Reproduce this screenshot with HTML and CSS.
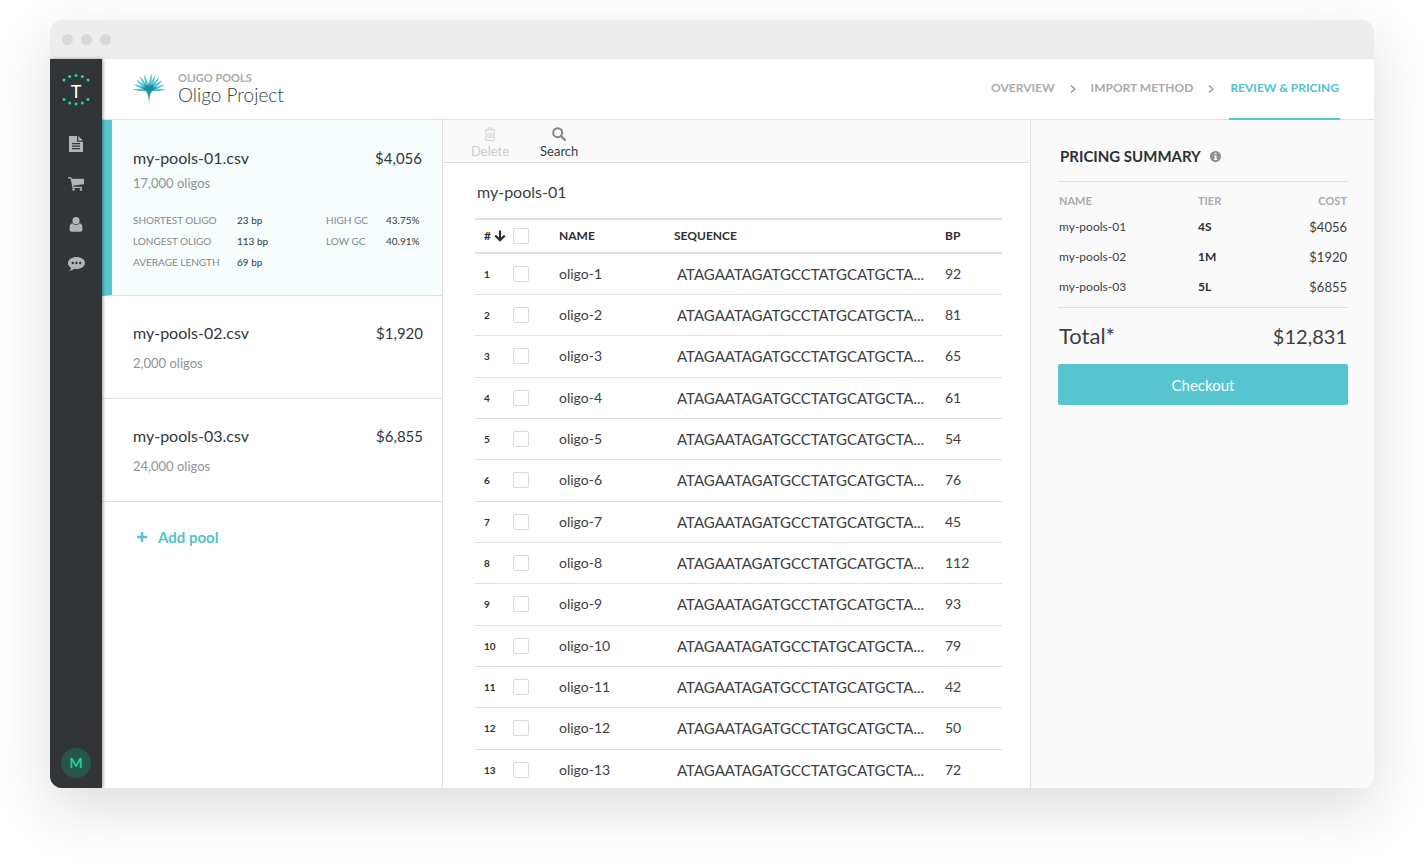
FILE: index.html
```html
<!DOCTYPE html>
<html lang="en">
<head>
<meta charset="utf-8">
<meta name="viewport" content="width=device-width, initial-scale=1">
<title>Oligo Project – Review &amp; Pricing</title>
<link rel="stylesheet" href="styles.css">
</head>
<body>
<div class="window">
  <div class="titlebar"><span class="dot"></span><span class="dot"></span><span class="dot"></span></div>
  <div class="app">
    <nav class="sidebar" aria-label="Main">
      <a class="brand" href="#" aria-label="Home">
        <svg width="30" height="34" viewBox="0 0 30 34">
          <g fill="#1fd79c">
            <circle cx="3" cy="7" r="1.5"/><circle cx="8.700" cy="3.600" r="1.5"/><circle cx="15" cy="2.500" r="1.5"/><circle cx="21.300" cy="3.600" r="1.5"/><circle cx="27" cy="7" r="1.5"/>
            <circle cx="3" cy="26.500" r="1.5"/><circle cx="8.700" cy="30" r="1.5"/><circle cx="15" cy="31" r="1.5"/><circle cx="21.300" cy="30" r="1.5"/><circle cx="27" cy="26.500" r="1.5"/>
          </g>
          <text class="brand-letter" x="15" y="25" text-anchor="middle">T</text>
        </svg>
      </a>
      <a class="nav-item" href="#" aria-label="Documents">
        <svg width="14" height="16" viewBox="0 0 14 16"><path fill="#b3b4b5" fill-rule="evenodd" d="M1.200 0H8v4.800c0 .6.400 1 1 1h5V15c0 .6-.5 1-1.100 1H1.200C.5 16 0 15.600 0 15V1c0-.6.500-1 1.200-1zM3 7v1.200h8V7zM3 9.500v1.200h8V9.500zM3 12v1.200h8V12zM9.300 0 14 4.600H9.300z"/></svg>
      </a>
      <a class="nav-item" href="#" aria-label="Cart">
        <svg width="16" height="14" viewBox="0 0 16 14"><path d="M0 .8h3l2 9.600h9" fill="none" stroke="#b3b4b5" stroke-width="1.200"/><path fill="#b3b4b5" d="M3.400 1.800H16v5.500L4.600 8.700z"/><circle cx="5.500" cy="12.500" r="1.300" fill="#b3b4b5"/><circle cx="13" cy="12.500" r="1.300" fill="#b3b4b5"/></svg>
      </a>
      <a class="nav-item" href="#" aria-label="Account">
        <svg width="14" height="15" viewBox="0 0 14 15"><circle cx="7" cy="3.700" r="3.600" fill="#b3b4b5"/><path fill="#b3b4b5" d="M3.500 6.300C4.500 7.500 5.700 8 7 8s2.500-.5 3.500-1.700c2.300.3 3 2.700 3 5.700 0 1.800-1 2.800-2.500 2.800H3C1.500 14.800.500 13.800.500 12c0-3 .7-5.400 3-5.700z"/></svg>
      </a>
      <a class="nav-item" href="#" aria-label="Messages">
        <svg width="17" height="14" viewBox="0 0 17 14"><path fill="#b3b4b5" d="M8.500 0C13.200 0 17 2.600 17 6s-3.800 6-8.500 6c-.8 0-1.600-.1-2.300-.2C4.900 13 3.300 13.700 1.500 13.900c.8-.9 1.400-1.900 1.500-3C1.200 9.700 0 8 0 6c0-3.400 3.800-6 8.500-6z"/><g fill="#313538"><circle cx="4.800" cy="6" r="1.200"/><circle cx="8.500" cy="6" r="1.200"/><circle cx="12.200" cy="6" r="1.200"/></g></svg>
      </a>
      <button class="avatar" type="button" aria-label="Profile M">M</button>
    </nav>
    <div class="content">
      <header class="topbar">
        <svg class="project-logo" width="34" height="34" viewBox="0 0 34 34">
          <defs>
            <path id="leaf-left" d="M17 19.500C14.800 14 14.200 7 15.500 1.500 17 7 18 13 17 19.500z"/>
            <path id="leaf-right" d="M17 19.500C19.200 14 19.800 7 18.500 1.500 17 7 16 13 17 19.500z"/>
          </defs>
          <g fill="#35b6c6" fill-opacity=".85">
            <use href="#leaf-left" transform="rotate(-82 17 18)"/><use href="#leaf-left" transform="rotate(-64 17 18)"/><use href="#leaf-left" transform="rotate(-46 17 18)"/><use href="#leaf-left" transform="rotate(-29 17 18)"/><use href="#leaf-left" transform="rotate(-12 17 18)"/>
            <use href="#leaf-right" transform="rotate(3 17 18)"/><use href="#leaf-right" transform="rotate(17 17 18)"/><use href="#leaf-right" transform="rotate(33 17 18)"/><use href="#leaf-right" transform="rotate(49 17 18)"/><use href="#leaf-right" transform="rotate(66 17 18)"/><use href="#leaf-right" transform="rotate(83 17 18)"/>
          </g>
          <path fill="#35b6c6" d="M14 19.500h6L17.600 24 17 33.500 16.400 24z"/>
          <path fill="#0c7f96" fill-opacity=".75" d="M17 10l1.500 4 3-2-.5 3.500 4-.5-4 3.500-3 2.500-1 7-1-7-3-2.500L9 15l4 .5-.5-3.500 3 2z"/>
        </svg>
        <div class="project">
          <span class="eyebrow">OLIGO POOLS</span>
          <h1 class="project-name">Oligo Project</h1>
        </div>
        <nav class="steps" aria-label="Progress">
          <a class="step" href="#">OVERVIEW</a>
          <svg class="chevron" width="6" height="8" viewBox="0 0 6 8"><path d="M1 .5 4.800 4 1 7.500" fill="none" stroke="#8d8f90" stroke-width="1.300"/></svg>
          <a class="step" href="#">IMPORT METHOD</a>
          <svg class="chevron" width="6" height="8" viewBox="0 0 6 8"><path d="M1 .5 4.800 4 1 7.500" fill="none" stroke="#8d8f90" stroke-width="1.300"/></svg>
          <a class="step current" href="#" aria-current="step">REVIEW &amp; PRICING</a>
        </nav>
      </header>
      <div class="columns">
        <section class="pools" aria-label="Pools">
          <article class="pool selected">
            <div class="pool-head"><h2 class="pool-name">my-pools-01.csv</h2><span class="pool-price">$4,056</span></div>
            <p class="pool-count">17,000 oligos</p>
            <dl class="stats">
              <dt>SHORTEST OLIGO</dt><dd>23 bp</dd><dt>HIGH GC</dt><dd>43.75%</dd>
              <dt>LONGEST OLIGO</dt><dd>113 bp</dd><dt>LOW GC</dt><dd>40.91%</dd>
              <dt>AVERAGE LENGTH</dt><dd>69 bp</dd>
            </dl>
          </article>
          <article class="pool">
            <div class="pool-head"><h2 class="pool-name">my-pools-02.csv</h2><span class="pool-price">$1,920</span></div>
            <p class="pool-count">2,000 oligos</p>
          </article>
          <article class="pool">
            <div class="pool-head"><h2 class="pool-name">my-pools-03.csv</h2><span class="pool-price">$6,855</span></div>
            <p class="pool-count">24,000 oligos</p>
          </article>
          <button class="add-pool" type="button"><svg width="10" height="10" viewBox="0 0 10 10"><path d="M5 0v10M0 5h10" stroke="#4fc3ce" stroke-width="2.400"/></svg>Add pool</button>
        </section>
        <main class="detail">
          <div class="toolbar">
            <button class="tool" type="button" disabled><svg width="12" height="14" viewBox="0 0 12 14"><path d="M.5 3h11M4 3V1h4v2M1.800 3v9.500c0 .6.300 1 .9 1h6.600c.6 0 .9-.4.900-1V3M4 5.500v5.500M6 5.500v5.500M8 5.500v5.500" fill="none" stroke="#d3d3d3"/></svg>Delete</button>
            <button class="tool" type="button"><svg width="14" height="14" viewBox="0 0 14 14"><circle cx="5.700" cy="5.700" r="4.500" fill="none" stroke="#858687" stroke-width="2"/><path d="M9 9l4 4" stroke="#858687" stroke-width="2.400" stroke-linecap="round"/></svg>Search</button>
          </div>
          <div class="sheet">
            <h2 class="sheet-title">my-pools-01</h2>
            <table class="oligos">
              <thead><tr>
                <th class="c-num"><span class="sort">#<svg width="12" height="12" viewBox="0 0 12 12"><path d="M6 .5v10M1.200 5.500 6 10.300l4.800-4.800" fill="none" stroke="#2c3033" stroke-width="2.200"/></svg></span></th>
                <th class="c-check"><input class="check" type="checkbox" aria-label="Select all"></th><th class="c-name">NAME</th><th class="c-seq">SEQUENCE</th><th class="c-bp">BP</th>
              </tr></thead>
              <tbody>
                <tr><td class="c-num">1</td><td><input class="check" type="checkbox" aria-label="Select oligo-1"></td><td>oligo-1</td><td class="c-seq">ATAGAATAGATGCCTATGCATGCTA...</td><td>92</td></tr>
                <tr><td class="c-num">2</td><td><input class="check" type="checkbox" aria-label="Select oligo-2"></td><td>oligo-2</td><td class="c-seq">ATAGAATAGATGCCTATGCATGCTA...</td><td>81</td></tr>
                <tr><td class="c-num">3</td><td><input class="check" type="checkbox" aria-label="Select oligo-3"></td><td>oligo-3</td><td class="c-seq">ATAGAATAGATGCCTATGCATGCTA...</td><td>65</td></tr>
                <tr><td class="c-num">4</td><td><input class="check" type="checkbox" aria-label="Select oligo-4"></td><td>oligo-4</td><td class="c-seq">ATAGAATAGATGCCTATGCATGCTA...</td><td>61</td></tr>
                <tr><td class="c-num">5</td><td><input class="check" type="checkbox" aria-label="Select oligo-5"></td><td>oligo-5</td><td class="c-seq">ATAGAATAGATGCCTATGCATGCTA...</td><td>54</td></tr>
                <tr><td class="c-num">6</td><td><input class="check" type="checkbox" aria-label="Select oligo-6"></td><td>oligo-6</td><td class="c-seq">ATAGAATAGATGCCTATGCATGCTA...</td><td>76</td></tr>
                <tr><td class="c-num">7</td><td><input class="check" type="checkbox" aria-label="Select oligo-7"></td><td>oligo-7</td><td class="c-seq">ATAGAATAGATGCCTATGCATGCTA...</td><td>45</td></tr>
                <tr><td class="c-num">8</td><td><input class="check" type="checkbox" aria-label="Select oligo-8"></td><td>oligo-8</td><td class="c-seq">ATAGAATAGATGCCTATGCATGCTA...</td><td>112</td></tr>
                <tr><td class="c-num">9</td><td><input class="check" type="checkbox" aria-label="Select oligo-9"></td><td>oligo-9</td><td class="c-seq">ATAGAATAGATGCCTATGCATGCTA...</td><td>93</td></tr>
                <tr><td class="c-num">10</td><td><input class="check" type="checkbox" aria-label="Select oligo-10"></td><td>oligo-10</td><td class="c-seq">ATAGAATAGATGCCTATGCATGCTA...</td><td>79</td></tr>
                <tr><td class="c-num">11</td><td><input class="check" type="checkbox" aria-label="Select oligo-11"></td><td>oligo-11</td><td class="c-seq">ATAGAATAGATGCCTATGCATGCTA...</td><td>42</td></tr>
                <tr><td class="c-num">12</td><td><input class="check" type="checkbox" aria-label="Select oligo-12"></td><td>oligo-12</td><td class="c-seq">ATAGAATAGATGCCTATGCATGCTA...</td><td>50</td></tr>
                <tr><td class="c-num">13</td><td><input class="check" type="checkbox" aria-label="Select oligo-13"></td><td>oligo-13</td><td class="c-seq">ATAGAATAGATGCCTATGCATGCTA...</td><td>72</td></tr>
              </tbody>
            </table>
          </div>
        </main>
        <aside class="pricing">
          <h2 class="pricing-title">PRICING SUMMARY <svg width="11" height="11" viewBox="0 0 11 11"><circle cx="5.500" cy="5.500" r="5.500" fill="#8d8f90"/><path d="M4.700 1.800h1.800v1.500H4.700zM4 4.500h2.500v3.300h.8V9H4V7.800h.8V5.600H4z" fill="#fff"/></svg></h2>
          <table class="costs">
            <thead><tr><th>NAME</th><th class="c-tier">TIER</th><th class="c-cost">COST</th></tr></thead>
            <tbody>
              <tr><td>my-pools-01</td><td class="c-tier">4S</td><td class="c-cost">$4056</td></tr>
              <tr><td>my-pools-02</td><td class="c-tier">1M</td><td class="c-cost">$1920</td></tr>
              <tr><td>my-pools-03</td><td class="c-tier">5L</td><td class="c-cost">$6855</td></tr>
            </tbody>
          </table>
          <div class="total"><span class="total-label">Total*</span><span>$12,831</span></div>
          <button class="checkout" type="button">Checkout</button>
        </aside>
      </div>
    </div>
  </div>
</div>
</body>
</html>
```
FILE: styles.css
```css
* { box-sizing: border-box; }
body {
  margin: 0;
  padding: 20px 50px 80px;
  height: 100vh;
  background: #fff;
  color: #3d4043;
  font: 14px/20px Lato, "Open Sans", sans-serif;
}
h1, h2, p, dl, dd { margin: 0; font-weight: 400; }
button { font: inherit; border: 0; background: none; padding: 0; cursor: pointer; }
a { text-decoration: none; color: inherit; }
svg { display: block; flex: none; }

.window {
  display: flex;
  flex-direction: column;
  height: 100%;
  border-radius: 12px;
  overflow: hidden;
  background: #fff;
  box-shadow: 0 20px 60px rgba(0, 0, 0, .14);
}
.titlebar {
  flex: none;
  display: flex;
  align-items: center;
  gap: 8px;
  height: 39px;
  padding: 0 12px;
  background: #ededed;
}
.dot { width: 11px; height: 11px; border-radius: 50%; background: #d9d9d9; }
.app { flex: 1; display: flex; min-height: 0; }

.sidebar {
  flex: none;
  z-index: 1;
  display: flex;
  flex-direction: column;
  align-items: center;
  width: 52px;
  padding: 14px 0 10px;
  background: #313538;
  box-shadow: 1px 0 3px rgba(0, 0, 0, .4);
}
.brand { margin-bottom: 17px; }
.brand-letter { font-size: 18px; fill: #fff; }
.nav-item { display: grid; place-items: center; width: 40px; height: 40px; }
.avatar {
  width: 30px;
  height: 30px;
  margin-top: auto;
  border-radius: 50%;
  background: #26564a;
  color: #24d095;
  font-weight: 700;
}

.content { flex: 1; display: flex; flex-direction: column; min-width: 0; }
.topbar {
  flex: none;
  display: flex;
  align-items: center;
  height: 61px;
  padding: 0 34px 0 30px;
  border-bottom: 1px solid #dfe0e0;
}
.project { display: flex; flex-direction: column; margin-left: 12px; }
.eyebrow { font-size: 11px; line-height: 12px; font-weight: 700; color: #a9abac; }
.project-name { font-size: 19px; line-height: 22px; font-weight: 300; }
.steps { display: flex; align-items: center; align-self: stretch; gap: 15px; margin-left: auto; font-size: 12px; font-weight: 700; color: #a9abac; }
.step { display: flex; align-items: center; align-self: stretch; padding-bottom: 2px; }
.current { margin-bottom: -1px; border-bottom: 2px solid #56c5d0; color: #4fc3ce; padding: 0 1px 1px; }

.columns { flex: 1; display: flex; min-height: 0; }
.pools { flex: none; width: 341px; border-right: 1px solid #dfe0e0; }
.pool { padding: 26px 19px 25px 31px; border-bottom: 1px solid #dfe0e0; }
.pool-head { display: flex; justify-content: space-between; font-size: 15px; line-height: 22px; color: #34383b; }
.pool-name { font-size: 16px; }
.pool-count { margin-top: 9px; font-size: 13px; color: #909394; }
.selected { padding: 27px 20px 22px 21px; border-left: 10px solid #56c5d0; background: #f7fdfd; }
.selected .pool-count { margin-top: 4px; }
.stats { display: grid; grid-template-columns: 104px 89px 60px auto; margin-top: 17px; font-size: 10px; line-height: 21px; }
.stats dt { color: #85888a; }
.stats dd { color: #34383b; }
.add-pool { display: flex; align-items: center; gap: 11px; padding: 25px 35px; font-size: 15px; font-weight: 700; color: #4fc3ce; }

.detail { flex: 1; min-width: 0; }
.toolbar { display: flex; gap: 31px; height: 43px; padding: 7px 28px 0; border-bottom: 1px solid #dfe0e0; background: #fafafa; }
.tool { display: flex; flex-direction: column; align-items: center; gap: 1px; height: 33px; font-size: 13px; line-height: 18px; color: #3d4043; }
.tool:disabled { color: #cbcccc; }
.sheet { padding: 18px 28px 0 32px; }
.sheet-title { padding-left: 2px; font-size: 16px; line-height: 22px; }
.oligos { width: 100%; margin-top: 15px; border-collapse: collapse; table-layout: fixed; text-align: left; }
.oligos th { height: 34px; padding: 0; border-top: 2px solid #dedfdf; border-bottom: 2px solid #dedfdf; font-size: 12px; color: #2c3033; }
.oligos td { height: 41px; padding: 0; border-bottom: 1px solid #dfe0e0; white-space: nowrap; }
.oligos tr:nth-child(3n) td { height: 42px; }
.oligos .c-num { width: 38px; padding-left: 9px; color: #2c3033; }
.oligos td.c-num { font-size: 10px; font-weight: 700; }
.sort { display: flex; align-items: center; gap: 3px; }
.c-check { width: 46px; }
.c-name { width: 115px; }
.oligos td.c-seq { padding-left: 3px; font-size: 15px; }
.c-bp { width: 57px; }
.check { display: block; appearance: none; width: 16px; height: 16px; margin: 0; border: 1px solid #d9dada; border-radius: 2px; background: #fff; }

.pricing { flex: none; width: 344px; padding: 26px 26px 0 27px; border-left: 1px solid #dfe0e0; background: #fafafa; }
.pricing-title { display: flex; align-items: center; gap: 9px; padding: 0 2px 15px; border-bottom: 1px solid #dfe0e0; font-size: 15px; font-weight: 700; color: #2c3033; }
.costs { width: 100%; margin-top: 8px; border-collapse: collapse; text-align: left; font-size: 12px; }
.costs th { height: 22px; padding: 0 1px; font-size: 11px; color: #a9abac; }
.costs td { height: 30px; padding: 0 1px; }
.costs .c-tier { width: 91px; }
.costs td.c-tier { font-weight: 700; color: #2c3033; }
.costs .c-cost { width: 60px; text-align: right; }
.costs td.c-cost { font-size: 13px; }
.total { display: flex; justify-content: space-between; align-items: center; height: 57px; margin-top: 5px; padding: 0 1px; border-top: 1px solid #dfe0e0; font-size: 20px; }
.total-label { font-size: 22px; }
.checkout { width: 100%; height: 41px; border-radius: 2px; background: #56c5d0; color: #fff; font-size: 15px; }
```
